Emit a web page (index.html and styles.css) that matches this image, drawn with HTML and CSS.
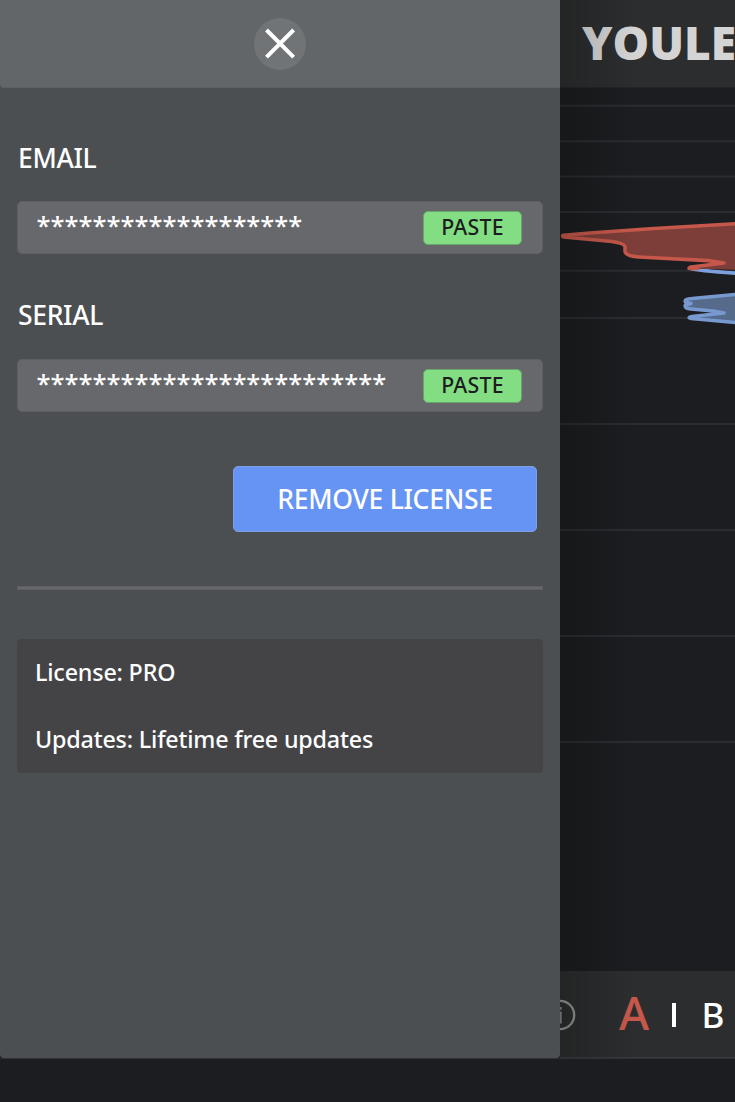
FILE: index.html
```html
<!DOCTYPE html>
<html lang="en">
<head>
<meta charset="utf-8">
<title>License</title>
<link rel="stylesheet" href="styles.css">
</head>
<body>
<div class="app">
  <aside class="panel">
    <header class="panel-head">
      <button class="close" aria-label="Close">
        <svg viewBox="0 0 52 52" width="52" height="52"><path d="M12.500 12 39.600 39.100M39.600 12 12.500 39.100" fill="none" stroke="#fff" stroke-width="4"/></svg>
      </button>
    </header>
    <div class="panel-body">
      <div class="label">EMAIL</div>
      <div class="field"><span class="stars">*******************</span><button class="paste"><span>PASTE</span></button></div>
      <div class="label label-serial">SERIAL</div>
      <div class="field"><span class="stars">*************************</span><button class="paste"><span>PASTE</span></button></div>
      <button class="remove"><span>REMOVE LICENSE</span></button>
      <div class="divider"></div>
      <div class="info">
        <div class="line">License: PRO</div>
        <div class="line">Updates: Lifetime free updates</div>
      </div>
    </div>
  </aside>
  <main class="main">
    <header class="main-head"><span class="brand">YOULE</span></header>
    <svg class="graph" viewBox="560 88 175 883" width="175" height="883">
      <g stroke="#2b2c30" stroke-width="2">
        <path d="M560 105.700H735M560 141.200H735M560 176.500H735M560 212H735M560 270.700H735M560 318H735M560 424H735M560 530H735M560 636H735M560 742H735"/>
      </g>
      <g stroke-width="3.600" stroke-linejoin="round">
        <path d="M740 294 L692 298.500 Q684 299 685.500 302 L691 303.500 L685.500 305 Q684 308.500 691 309 L713 311 L724 313 L692 316.500 Q687 317.500 691 318.500 L740 323Z" fill="#566a8b" stroke="#7799d0"/>
        <path d="M691 268.500 Q697 270.500 740 273.500" fill="none" stroke="#7da0dc"/>
        <path d="M740 223.500 L650 228.700 L590 233 L563.500 235.200 Q561.500 236 563.500 237 L612 241.500 Q625 243.500 625 247 V251 Q625 256 639 257 L708 260.600 L724 263 L691 267 Q687 268.500 691 268.500 L740 270Z" fill="#7d3e39"/>
        <path d="M740 223.500 L650 228.700 L590 233 L563.500 235.200 Q561.500 236 563.500 237 L612 241.500 Q625 243.500 625 247 V251 Q625 256 639 257 L708 260.600 L724 263 L691 267 Q687 268.500 691 268.500 L699 268.500" fill="none" stroke="#c5584b"/>
      </g>
    </svg>
    <footer class="main-foot">
      <svg class="info-icon" viewBox="0 0 32 32" width="32" height="32"><circle cx="16" cy="16" r="14.200" fill="none" stroke="#929394" stroke-width="2.300"/><path d="M16.700 13V23.700M13.500 13.500h4M13.500 23.500h4.300M16.700 8v2.800" fill="none" stroke="#858687" stroke-width="2"/></svg>
      <span class="slot-a">A</span>
      <span class="bar"></span>
      <span class="slot-b">B</span>
    </footer>
    <div class="shade"></div>
  </main>
</div>
<div class="status"></div>
</body>
</html>
```

FILE: styles.css
```css
* { box-sizing: border-box; }
body {
  margin: 0;
  width: 735px;
  height: 1102px;
  overflow: hidden;
  background: #1c1d20;
  color: #fff;
  font-family: "Noto Sans", "Open Sans", sans-serif;
  font-weight: 500;
}
button {
  border: 0;
  padding: 0;
  font: inherit;
  color: inherit;
  display: flex;
  align-items: center;
  justify-content: center;
}
.app { display: flex; height: 1058px; }
.panel {
  flex: 0 0 560px;
  background: #4b4f52;
  border-radius: 0 0 4px 4px;
  overflow: hidden;
}
.panel-head {
  height: 88px;
  background: #626669;
  border-bottom: 1px solid #5d6164;
  border-radius: 0 0 0 4px;
  display: flex;
  justify-content: center;
  padding-top: 17.500px;
}
.close {
  width: 52px;
  height: 52px;
  border-radius: 50%;
  background: #707477;
}
.panel-body {
  padding: 52px 17px 0;
  display: flex;
  flex-direction: column;
}
.label {
  height: 36px;
  line-height: 36px;
  font-size: 26.500px;
  letter-spacing: -.32px;
  padding-left: 1px;
  margin-bottom: 25px;
  white-space: nowrap;
}
.label-serial { margin: 43px 0 26px; }
.field {
  height: 53px;
  background: #67686c;
  border: 1px solid #5d5f63;
  border-radius: 5px;
  display: flex;
  align-items: center;
  justify-content: space-between;
  padding: 0 20px 0 18.500px;
}
.stars { font-size: 25.540px; line-height: 36px; margin-bottom: 5px; }
.paste {
  width: 99px;
  height: 34px;
  background: #83dd82;
  border: 1px solid #67a86a;
  border-radius: 5px;
  color: #1c1d20;
  font-size: 21.300px;
  letter-spacing: .25px;
  padding-bottom: 2px;
}
.remove {
  align-self: flex-end;
  margin: 54px 6px 0 0;
  width: 304px;
  height: 66px;
  background: #6694f5;
  border: 1px solid #7f9fe2;
  border-radius: 5px;
  font-size: 26.500px;
  letter-spacing: -.28px;
}
.divider {
  height: 4px;
  margin-top: 54px;
  background: #67686c;
  border: 1px solid #5d5f63;
}
.info {
  margin-top: 49px;
  height: 134px;
  padding-left: 18px;
  background: #444447;
  border-radius: 4px;
}
.line {
  height: 67px;
  line-height: 66px;
  font-size: 23.300px;
  letter-spacing: -.18px;
  white-space: nowrap;
}
.main {
  flex: 0 0 175px;
  display: flex;
  flex-direction: column;
  position: relative;
  overflow: hidden;
}
.main-head {
  height: 88px;
  background: #2c2d2e;
  padding: 0 0 3px 22px;
  display: flex;
  align-items: center;
  border-bottom: 1px solid #242527;
}
.brand {
  font-family: "Open Sans", "Noto Sans", sans-serif;
  font-size: 46px;
  font-weight: 800;
  color: #d4d4d4;
}
.graph { display: block; flex: none; }
.main-foot {
  height: 87px;
  background: #2c2d2e;
  display: flex;
  align-items: center;
  border-bottom: 1px solid #38393c;
}
.info-icon { flex: none; margin: 2px 0 0 -16px; }
.slot-a { width: 31px; margin: 0 0 5px 43px; font-size: 46px; line-height: 60px; color: #c5584b; }
.bar { width: 4px; height: 24px; background: #fff; margin: 1px 0 0 22px; }
.slot-b { margin: 1px 0 0 25.500px; font-size: 35px; line-height: 60px; }
.shade {
  position: absolute;
  inset: 0 auto 0 0;
  width: 75px;
  background: linear-gradient(90deg, rgba(0,0,0,.2), transparent);
}
.status { height: 44px; border-top: 1px solid #303134; background: #1c1d20; }
```
